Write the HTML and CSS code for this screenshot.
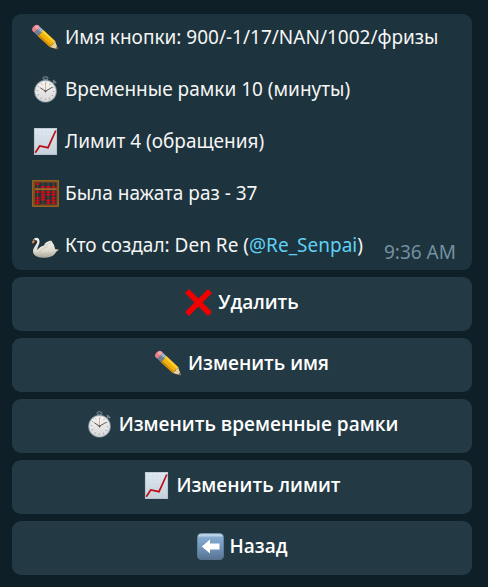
FILE: index.html
```html
<!DOCTYPE html>
<html lang="ru">
<head>
<meta charset="utf-8">
<meta name="viewport" content="width=device-width, initial-scale=1">
<title>Кнопка</title>
<link rel="stylesheet" href="styles.css">
</head>
<body>
<svg class="sprite" aria-hidden="true">
  <defs>
    <linearGradient id="g-face" x1="0" y1="0" x2="0" y2="1"><stop offset="0" stop-color="#f6f5f3"/><stop offset="1" stop-color="#d9d9da"/></linearGradient>
    <linearGradient id="g-paper" x1="0" y1="0" x2="0" y2="1"><stop offset="0" stop-color="#e1eaf2"/><stop offset="1" stop-color="#c5cfd8"/></linearGradient>
    <linearGradient id="g-back" x1="0" y1="0" x2="0" y2="1"><stop offset="0" stop-color="#91b4d5"/><stop offset=".5" stop-color="#7198bf"/><stop offset="1" stop-color="#587391"/></linearGradient>
    <linearGradient id="g-swan" x1="0" y1="0" x2="0" y2="1"><stop offset="0" stop-color="#f5f2e9"/><stop offset=".65" stop-color="#dedace"/><stop offset="1" stop-color="#a9a599"/></linearGradient>
    <symbol id="pencil" viewBox="0 0 27 27">
      <g transform="translate(3.7 4.5) rotate(43)">
        <path d="M0-4H2V4H0Q-3 4-3 0T0-4Z" fill="#e8808b"/>
        <path d="M-1-3.5Q-2.4-2-2 0L2-.5V-4H0Z" fill="#f5a3aa"/>
        <path d="M2-4H7V4H2Z" fill="#75869a"/>
        <path d="M2-4H7V-1H2Z" fill="#b6c2cd"/>
        <path d="M3.5-4V4M5.5-4V4" stroke="#53657a" stroke-width=".5"/>
        <path d="M7-4H23V4H7Z" fill="#f2b20d"/>
        <path d="M7-4H23V-1.6H7Z" fill="#ffd02f"/>
        <path d="M7 2H23V4H7Z" fill="#d28d08"/>
        <path d="M22.8-4 30-.3Q30.5 0 30 .3L22.8 4Q24.2 2.8 22.8 1.5 24.2 0 22.8-1.5 24.2-2.8 22.8-4Z" fill="#edcf9b"/>
        <path d="M28-1.2 30.2 0 28 1.2Z" fill="#564a42"/>
      </g>
    </symbol>
    <symbol id="watch" viewBox="0 0 27 27">
      <path d="M11.3 5V2.8h4.5V5" fill="#55646c"/>
      <ellipse cx="13.5" cy="2.3" rx="2.6" ry="1.6" fill="#334750" stroke="#82949c" stroke-width=".9"/>
      <path d="m20.7 7.4 1.7-1.8" stroke="#87959b" stroke-width="1.4"/>
      <path d="m21.5 4.6 2.2 2.1" stroke="#71828a" stroke-width="1.8" stroke-linecap="round"/>
      <circle cx="13.5" cy="15.2" r="11.4" fill="#73848d"/>
      <circle cx="13.5" cy="15.2" r="10.7" fill="#c7ccce"/>
      <circle cx="13.5" cy="15.2" r="10" fill="url(#g-face)"/>
      <circle cx="13.5" cy="15.2" r="8.1" fill="none" stroke="#777" stroke-width="1.5" stroke-dasharray=".55 3.69"/>
      <path d="M13.5 15.2 8.6 12M13.5 15.2 20 11.4" stroke="#47484a" stroke-width=".9" stroke-linecap="round"/>
      <path d="M13.5 17V6.8" stroke="#dd9270" stroke-width=".7"/>
      <circle cx="13.5" cy="15.2" r="1" fill="#555"/>
    </symbol>
    <symbol id="chart" viewBox="0 0 27 27">
      <path d="M2 0H25V27H2Z" fill="url(#g-paper)"/>
      <path d="M6 .5V26M10 .5V26M14 .5V26M18 .5V26M22 .5V26M2.5 4H24.500M2.500 8H24.500M2.500 12H24.500M2.500 16H24.500M2.500 20H24.500M2.500 24H24.500" stroke="#cbd9e5" stroke-width=".4"/>
      <path d="M2.400.4H24.600V26.600H2.400Z" fill="none" stroke="#aebac3" stroke-width=".7"/>
      <path d="M3.300 24.700 7.700 18 16 19.700 23.800 2.500" fill="none" stroke="#bd0f19" stroke-width="1.700"/>
    </symbol>
    <symbol id="abacus" viewBox="0 0 27 27">
      <path d="M0 0H27V27H0Z" fill="#7f4b18"/>
      <path d="M.7.7H26.300V26.300H.7Z" fill="none" stroke="#a56b2a" stroke-width=".8"/>
      <path d="M3 2.500H24.500V8.200H3ZM3 10.200H24.500V24.500H3Z" fill="#243239"/>
      <path d="M5.500 2.500V24.500M11 2.500V24.500M16.200 2.500V24.500M21.500 2.500V24.500" stroke="#765044" stroke-width=".7"/>
      <path d="M3 9.200H24.500" stroke="#a3682b" stroke-width="1.600"/>
      <g stroke="#cf0b14" stroke-width="2.200" stroke-linecap="round">
        <path d="M4.500 4H6.500M10 7H12M15.200 7H17.200M20.500 7H22.500"/>
        <path d="M4.500 12H6.500M10 12H12M15.200 12H17.200M20.500 12H22.500M10 14.600H12M15.200 14.600H17.200M20.500 14.600H22.500M10 17.200H12M4.500 18H6.500M4.500 20.500H6.500M4.500 23H6.500M10 19.600H12M15.200 20.500H17.200M15.200 23H17.200M20.500 18H22.500M20.500 20.500H22.500M20.500 23H22.500"/>
      </g>
    </symbol>
    <symbol id="swan" viewBox="0 0 27 27">
      <path d="M3.400 6Q6.800 5.200 7.500 9C8 12.500 4.800 15 5.500 18 7 15.500 9.500 14 12 13.500 12.500 11 15.500 8.500 19.800 8.700 19.200 9.300 20.500 10.400 21.600 12.300 22.500 13.900 22.600 15.800 23.300 17.200L27 17.800Q24.800 19.200 24 20C22 24 18 25.800 12 25.700 5.500 25.700 1 23.500 1 19.500 1 15 5.400 12.400 5.200 9 5 8 4 8 3.100 8.300L1.600 10.500Q0 11.700.3 9.800L1.500 7.400Q2.200 6.200 3.400 6Z" fill="url(#g-swan)"/>
      <path d="M2 8.200 3.200 8.700 1.800 11.200.2 11.600.6 9.600Z" fill="#cc702f"/>
      <path d="M1.300 8.500 2.400 7.300 3.200 8.300 2 9.100Z" fill="#34302d"/>
      <path d="M7 20.500Q10.500 15.300 16 14.500M9.500 22.500C15 23.700 19 21.800 23 18.300M12 13.600C15.500 12.500 17.500 11.500 19.500 9.500" fill="none" stroke="#c2beb2" stroke-width=".7"/>
    </symbol>
    <symbol id="cross" viewBox="0 0 27 27">
      <path d="M4 0 13.500 9.500 23 0 27 4 17.500 13.500 27 23 23 27 13.500 17.500 4 27 0 23 9.500 13.500 0 4Z" fill="#f10000"/>
    </symbol>
    <symbol id="back" viewBox="0 0 27 27">
      <rect width="27" height="27" rx="4.500" fill="#587088"/>
      <rect x=".6" y=".6" width="25.800" height="25.800" rx="4" fill="url(#g-back)"/>
      <path d="M4.500 1H22.500Q25.300 1 26 3.500H1Q1.700 1 4.500 1Z" fill="#c4dbea" opacity=".8"/>
      <path d="M4.800 13.500 13 6.500V10.500H22.500V16.500H13V20.500Z" fill="#fff"/>
    </symbol>
  </defs>
</svg>
<main class="chat">
  <article class="message">
    <p class="line"><svg class="emoji" aria-hidden="true"><use href="#pencil"/></svg><span>Имя кнопки: 900/-1/17/NAN/1002/фризы</span></p>
    <p class="line"><svg class="emoji" aria-hidden="true"><use href="#watch"/></svg><span>Временные рамки 10 (минуты)</span></p>
    <p class="line"><svg class="emoji" aria-hidden="true"><use href="#chart"/></svg><span>Лимит 4 (обращения)</span></p>
    <p class="line"><svg class="emoji" aria-hidden="true"><use href="#abacus"/></svg><span>Была нажата раз - 37</span></p>
    <div class="line"><svg class="emoji" aria-hidden="true"><use href="#swan"/></svg><span>Кто создал: Den Re (<a class="mention" href="#">@Re_Senpai</a>)</span><time class="time">9:36 AM</time></div>
  </article>
  <button class="action" type="button"><svg class="emoji" aria-hidden="true"><use href="#cross"/></svg><span>Удалить</span></button>
  <button class="action" type="button"><svg class="emoji" aria-hidden="true"><use href="#pencil"/></svg><span>Изменить имя</span></button>
  <button class="action" type="button"><svg class="emoji" aria-hidden="true"><use href="#watch"/></svg><span>Изменить временные рамки</span></button>
  <button class="action" type="button"><svg class="emoji" aria-hidden="true"><use href="#chart"/></svg><span>Изменить лимит</span></button>
  <button class="action" type="button"><svg class="emoji" aria-hidden="true"><use href="#back"/></svg><span>Назад</span></button>
</main>
</body>
</html>
```
FILE: styles.css
```css
* {
  box-sizing: border-box;
}

body {
  margin: 0;
  background: #0e1f27;
  color: #f5f5f5;
  font: 19px/26px "Noto Sans", "Open Sans", sans-serif;
}

.sprite {
  position: absolute;
  width: 0;
  height: 0;
}

.chat {
  display: flex;
  flex-direction: column;
  gap: 7px;
  padding: 14px 16px 12px 12px;
}

.message {
  display: flex;
  flex-direction: column;
  gap: 24px;
  padding: 10px 16px 10px 20px;
  border-radius: 9px;
  background: #1d333d;
}

.line {
  display: flex;
  align-items: flex-start;
  gap: 6px;
  min-height: 28px;
  margin: 0;
}

.emoji {
  flex: none;
  width: 27px;
  height: 27px;
}

.mention {
  color: #5fd0f5;
  text-decoration: none;
}

.time {
  align-self: flex-end;
  margin-left: auto;
  color: #7490a0;
  line-height: 16px;
  white-space: nowrap;
}

.action {
  display: flex;
  align-items: flex-start;
  justify-content: center;
  gap: 6px;
  min-height: 54px;
  padding: 12px 16px;
  border: 0;
  border-radius: 9px;
  background: #233a45;
  color: #fff;
  font: 600 19px/26px "Open Sans", "Noto Sans", sans-serif;
  cursor: pointer;
}
```
